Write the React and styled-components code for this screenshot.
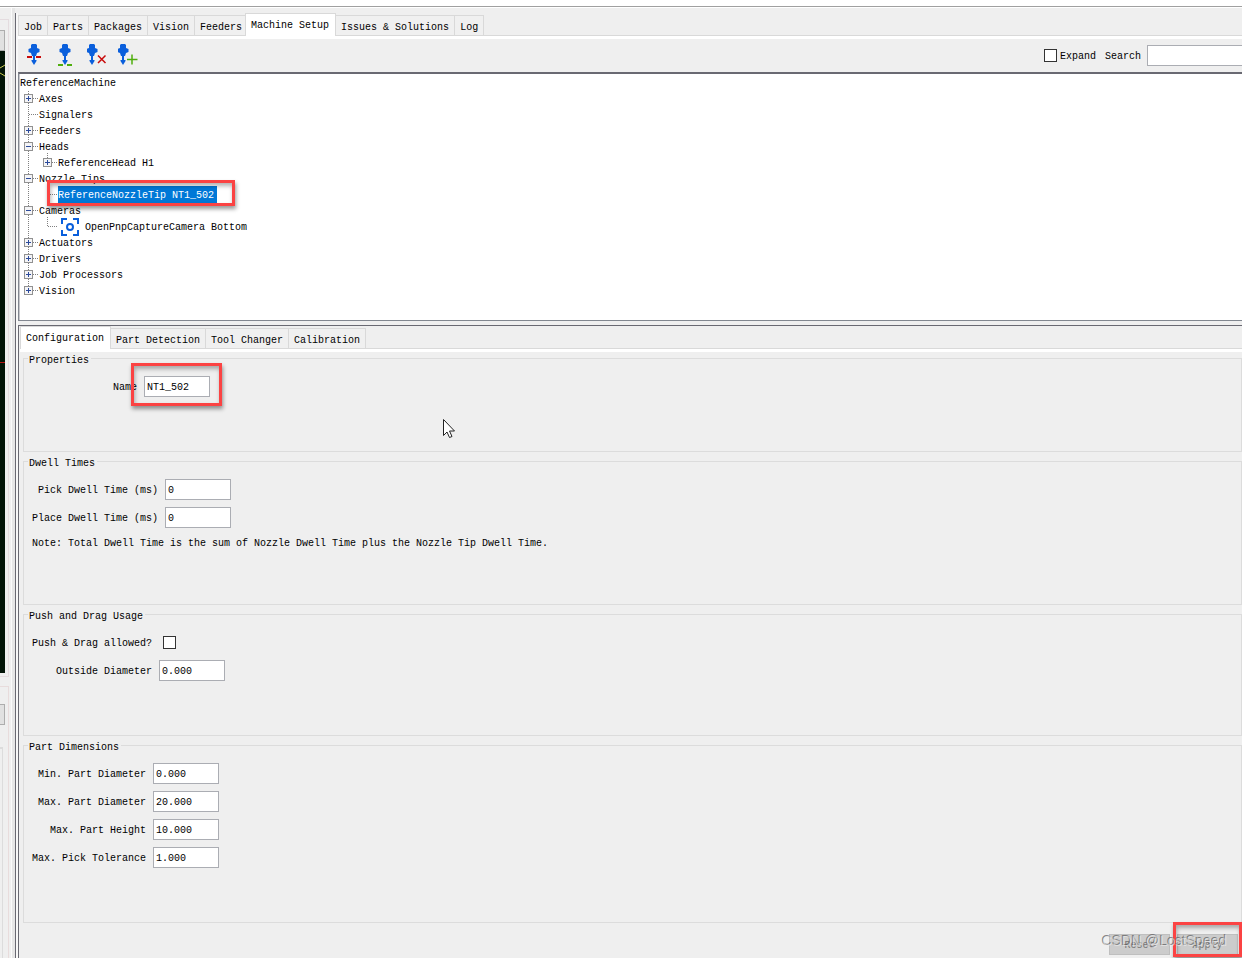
import React from 'react';
import styled, { createGlobalStyle } from 'styled-components';

const GlobalStyle = createGlobalStyle`
    *, *::before, *::after {
        box-sizing: border-box;
    }

    body {
        margin: 0;
        background: #efefef;
        color: #000;
        font-family: "Liberation Mono", monospace;
        font-size: 10px;
        line-height: 16px;
        overflow: hidden;
    }

    button, input {
        font: inherit;
        color: inherit;
    }
`;

const Page = styled.div`
    min-height: 100vh;
    display: flex;
    flex-direction: column;
`;

const TopEdge = styled.div`
    height: 8px;
    background: #fff;
    border-bottom: 1px solid #fff;
    box-shadow: inset 0 -1px 0 #a0a0a0;
`;

const Body = styled.div`
    flex: 1;
    display: flex;
`;

/* strip of the camera panel left of the splitter */
const CameraSide = styled.aside`
    width: 15px;
    padding: 11px 3px 0 0;
    border-right: 3px solid #e6e6e6;
    box-shadow: inset -1px 0 0 #fafafa;
    display: flex;
    flex-direction: column;
`;

const CameraFrame = styled.div`
    padding: 10px 3px 3px 0;
    border: 1px solid #e4dcdf;
    border-left: 0;
`;

const SideButton = styled.button`
    display: block;
    width: 5px;
    height: 21px;
    padding: 0;
    background: #e1e1e1;
    border: 1px solid #adadad;
    border-left: 0;
`;

const CameraImage = styled.svg`
    display: block;
    width: 5px;
    height: 622px;
    background: #021407;
`;

const JogFrame = styled.div`
    flex: 1;
    margin-top: 9px;
    padding-top: 17px;
    border: 1px solid #e8dcdc;
    border-left: 0;
    border-bottom: 0;
`;

const JogPanel = styled.div`
    width: 3px;
    height: 100%;
    margin-top: 22px;
    border: 1px solid #dcdcdc;
    border-left: 0;
    border-top-width: 2px;
`;

const Main = styled.main`
    flex: 1;
    min-width: 0;
    margin-top: 5px;
    padding-left: 2px;
    border-left: 1px solid #696972;
    background: #efefef;
    box-shadow: inset 2px 0 0 #f8f8f8;
    display: flex;
    flex-direction: column;
`;

const TabBar = styled.div`
    display: flex;
    align-items: flex-end;
    height: 23px;
    border-bottom: 1px solid #d9d9d9;
`;

const Tab = styled.button`
    height: ${props => (props.$active ? 23 : 20)}px;
    margin: ${props => (props.$active ? '0 -1px -1px -2px' : '0')};
    padding: ${props => (props.$active ? '2px 6px 1px 5px' : '5px 5px 0')};
    background: ${props => (props.$active ? '#fff' : '#f0f0f0')};
    border: 1px solid #d9d9d9;
    border-right-width: ${props => (props.$active || props.$last ? 1 : 0)}px;
    border-bottom: 0;
    line-height: 14px;
    white-space: nowrap;
    z-index: ${props => (props.$active ? 1 : 0)};

    &:first-child {
        margin-left: 0;
    }
`;

const TabEdge = styled.div`
    height: 3px;
    background: #fff;
`;

const Toolbar = styled.div`
    height: 33px;
    padding: 3px 0 0 7px;
    display: flex;
    align-items: flex-start;
    overflow: hidden;
`;

const IconButton = styled.button`
    width: 31px;
    height: 26px;
    padding: 0;
    border: 0;
    background: none;

    svg {
        display: block;
    }
`;

const SearchBar = styled.div`
    height: 27px;
    margin-left: auto;
    display: flex;
    align-items: center;
`;

const Check = styled.input`
    appearance: none;
    width: 13px;
    height: 13px;
    margin: 0;
    background: #fff;
    border: 1px solid #333;
`;

const CheckLabel = styled.div`
    display: flex;
    align-items: center;
    gap: 3px;
    margin-right: 9px;
`;

const SearchLabel = styled.label`
    padding-top: 2px;
`;

const SearchInput = styled.input`
    width: 95px;
    height: 21px;
    margin-left: 6px;
    padding: 0 2px;
    background: #fff;
    border: 1px solid #abadb3;
    border-right: 0;
    border-radius: 0;
`;

const TreePane = styled.div`
    height: 249px;
    padding-top: 1px;
    background: #fff;
    border: 1px solid #828790;
    border-top: 2px solid #696972;
    border-right: 0;
    box-shadow: inset 1px 0 0 #c8c8cc;
`;

const TreeList = styled.ul`
    margin: 0;
    padding: 0;
    list-style: none;
`;

const TreeRow = styled.li`
    position: relative;
    height: 16px;
    padding-left: ${props => [1, 5, 24][props.$level]}px;
    display: flex;
    align-items: center;
    white-space: nowrap;
`;

const TreeGuide = styled.svg`
    flex: none;
    width: 15px;
    height: 16px;
    overflow: visible;
`;

const TreeText = styled.span`
    padding: 2px 3px 0 0;
    background: ${props => (props.$selected ? '#0078d7' : 'transparent')};
    color: ${props => (props.$selected ? '#fff' : '#000')};
`;

const CameraIcon = styled.svg`
    flex: none;
    width: 18px;
    height: 18px;
    margin: 0 6px 0 3px;
`;

const Detail = styled.section`
    flex: 1;
    margin-top: 4px;
    padding-left: 1px;
    border-top: 1px solid #696972;
    border-left: 1px solid #696972;
    display: flex;
    flex-direction: column;
`;

const Form = styled.form`
    flex: 1;
    padding-left: 3px;
    display: flex;
    flex-direction: column;
`;

const Group = styled.fieldset`
    min-width: 0;
    margin: 0 0 3px;
    padding: 11px 8px 54px;
    border: 1px solid #dcdcdc;
`;

const Legend = styled.legend`
    margin-left: -4px;
    padding: 4px 2px 0 1px;
    line-height: 9px;
`;

const Fields = styled.div`
    display: grid;
    grid-template-columns: minmax(${props => props.$labelWidth || 0}px, max-content) max-content;
    grid-auto-rows: 21px;
    align-items: center;
    gap: 7px;
`;

const FieldLabel = styled.label`
    padding-top: 2px;
    text-align: right;
    white-space: nowrap;
`;

const FieldInput = styled.input`
    width: 66px;
    height: 21px;
    padding: 1px 2px 0;
    background: #fff;
    border: 1px solid #abadb3;
    border-radius: 0;
`;

const FieldCheck = styled(Check)`
    margin-left: 4px;
`;

const FieldBox = styled.div`
    position: relative;
    display: flex;
`;

const Note = styled.p`
    margin: 9px 0 0;
    line-height: 13px;
`;

const Actions = styled.div`
    position: relative;
    margin-top: auto;
    padding: 0 4px 3px 0;
    display: flex;
    justify-content: flex-end;
    gap: 7px;
`;

const ActionButton = styled.button`
    width: 61px;
    height: 21px;
    padding: 3px 0 0;
    border: 1px solid #bfbfbf;
    background: #ccc;
    color: #777;
`;

/* red marker frame laid over the part it points at */
const Marker = styled.div`
    position: absolute;
    top: ${props => props.$top}px;
    left: ${props => props.$left}px;
    width: ${props => props.$width}px;
    height: ${props => props.$height}px;
    border: 3px solid #fb4343;
    box-shadow: 1px 3px 4px rgba(0, 0, 0, 0.4), inset 1px 3px 4px rgba(0, 0, 0, 0.3);
    pointer-events: none;
    z-index: 2;
`;

const ApplyBox = styled.div`
    position: relative;
    display: flex;
`;

const Watermark = styled.span`
    position: absolute;
    right: 15px;
    bottom: 9px;
    color: rgba(240, 240, 240, 0.6);
    font-family: "Liberation Sans", sans-serif;
    font-size: 14px;
    text-shadow: -1px -1px 0 rgba(90, 90, 90, 0.7);
    white-space: nowrap;
    pointer-events: none;
    z-index: 3;
`;

const Pointer = styled.svg`
    position: absolute;
    left: 443px;
    top: 419px;
    width: 13px;
    height: 20px;
    pointer-events: none;
`;

const mainTabs = ['Job', 'Parts', 'Packages', 'Vision', 'Feeders', 'Machine Setup', 'Issues & Solutions', 'Log'];
const detailTabs = ['Configuration', 'Part Detection', 'Tool Changer', 'Calibration'];

const treeRows = [
    { text: 'ReferenceMachine', level: 0 },
    { text: 'Axes', level: 1, sign: '+' },
    { text: 'Signalers', level: 1 },
    { text: 'Feeders', level: 1, sign: '+' },
    { text: 'Heads', level: 1, sign: '-' },
    { text: 'ReferenceHead H1', level: 2, sign: '+' },
    { text: 'Nozzle Tips', level: 1, sign: '-' },
    { text: 'ReferenceNozzleTip NT1_502', level: 2, selected: true },
    { text: 'Cameras', level: 1, sign: '-' },
    { text: 'OpenPnpCaptureCamera Bottom', level: 2, camera: true },
    { text: 'Actuators', level: 1, sign: '+' },
    { text: 'Drivers', level: 1, sign: '+' },
    { text: 'Job Processors', level: 1, sign: '+' },
    { text: 'Vision', level: 1, sign: '+', last: true },
];

function Tabs({ items, active }) {
    return (
        <TabBar role="tablist">
            {items.map((item, i) => (
                <Tab
                    key={item}
                    type="button"
                    role="tab"
                    aria-selected={item === active}
                    $active={item === active}
                    $last={i === items.length - 1}
                >
                    {item}
                </Tab>
            ))}
        </TabBar>
    );
}

const nozzle = 'M-2 2h4l1 1v3l2.500 1v3l-2.500 1l-1 3h-1v4h1.500v1l-2.500 4l-2.500 -4v-1h1.500v-4h-1l-1 -3l-2.500 -1v-3l2.500 -1v-3z';

function NozzleIcon({ kind }) {
    const center = kind === 'load' || kind === 'unload' ? 9 : 5;
    return (
        <svg width="26" height="26" viewBox="0 0 26 26">
            <path fill="#0a5fdc" transform={`translate(${center} 0)`} d={nozzle} />
            {kind === 'load' && <path fill="#c80a0a" d="M2 14h5v2h-5zM11 14h5v2h-5z" />}
            {kind === 'unload' && <path fill="#4fae0c" d="M2 22h5v2h-5zM11 22h5v2h-5z" />}
            {kind === 'remove' && <path stroke="#c80a0a" strokeWidth="1.500" d="M11 13.500l7.500 7.500M18.500 13.500l-7.500 7.500" />}
            {kind === 'add' && <path stroke="#4fae0c" strokeWidth="1.500" d="M9 17.500h10.500M14 12.500v10" />}
        </svg>
    );
}

function Guide({ row }) {
    const dots = { stroke: '#808080', strokeDasharray: '1 1' };
    return (
        <TreeGuide viewBox="0 0 15 16">
            {row.level === 1 && <path {...dots} d={row.last ? 'M4.500 0V8' : 'M4.500 0V16'} />}
            {row.level === 2 && <path {...dots} d="M4.500 -2V8M-14.500 0V16" />}
            <path {...dots} d="M5 7.500H14" />
            {row.sign && (
                <>
                    <rect x="0.500" y="3.500" width="8" height="8" fill="#f4f4f6" stroke="#919191" />
                    <path stroke="#2b4a9b" d={row.sign === '+' ? 'M2 7.500h5M4.500 5v5' : 'M2 7.500h5'} />
                </>
            )}
        </TreeGuide>
    );
}

function Tree() {
    return (
        <TreePane>
            <TreeList>
                {treeRows.map(row => (
                    <TreeRow key={row.text} $level={row.level}>
                        {row.level > 0 && <Guide row={row} />}
                        {row.camera && (
                            <CameraIcon viewBox="0 0 18 18" fill="none" stroke="#0a5fdc" strokeWidth="2">
                                <path d="M1 6V1h5M12 1h5v5M17 12v5h-5M6 17H1v-5" />
                                <circle cx="9" cy="9" r="3" />
                            </CameraIcon>
                        )}
                        <TreeText $selected={row.selected}>{row.text}</TreeText>
                        {row.selected && <Marker $top={-7} $left={28} $width={188} $height={26} />}
                    </TreeRow>
                ))}
            </TreeList>
        </TreePane>
    );
}

function Field({ id, label, value, children }) {
    return (
        <>
            <FieldLabel htmlFor={id}>{label}</FieldLabel>
            <FieldBox>
                <FieldInput id={id} type="text" defaultValue={value} />
                {children}
            </FieldBox>
        </>
    );
}

function NozzleTipForm() {
    return (
        <Form>
            <Group>
                <Legend>Properties</Legend>
                <Fields $labelWidth={105}>
                    <Field id="name" label="Name" value="NT1_502">
                        <Marker $top={-13} $left={-13} $width={91} $height={43} />
                    </Field>
                </Fields>
            </Group>
            <Group>
                <Legend>Dwell Times</Legend>
                <Fields>
                    <Field id="pick-dwell" label="Pick Dwell Time (ms)" value="0" />
                    <Field id="place-dwell" label="Place Dwell Time (ms)" value="0" />
                </Fields>
                <Note>Note: Total Dwell Time is the sum of Nozzle Dwell Time plus the Nozzle Tip Dwell Time.</Note>
            </Group>
            <Group>
                <Legend>Push and Drag Usage</Legend>
                <Fields>
                    <FieldLabel htmlFor="push-drag">Push &amp; Drag allowed?</FieldLabel>
                    <FieldCheck id="push-drag" type="checkbox" />
                    <Field id="outside" label="Outside Diameter" value="0.000" />
                </Fields>
            </Group>
            <Group>
                <Legend>Part Dimensions</Legend>
                <Fields>
                    <Field id="min-diameter" label="Min. Part Diameter" value="0.000" />
                    <Field id="max-diameter" label="Max. Part Diameter" value="20.000" />
                    <Field id="max-height" label="Max. Part Height" value="10.000" />
                    <Field id="tolerance" label="Max. Pick Tolerance" value="1.000" />
                </Fields>
            </Group>
            <Actions>
                <ActionButton type="button" disabled>Reset</ActionButton>
                <ApplyBox>
                    <ActionButton type="button" disabled>Apply</ActionButton>
                    <Marker $top={-12} $left={-4} $width={69} $height={35} />
                </ApplyBox>
                <Watermark>CSDN @LostSpeed</Watermark>
            </Actions>
        </Form>
    );
}

function App() {
    return (
        <Page>
            <GlobalStyle />
            <TopEdge />
            <Body>
                <CameraSide>
                    <CameraFrame>
                        <SideButton type="button" aria-label="Camera" />
                        <CameraImage viewBox="0 0 5 622">
                            <path fill="none" stroke="#c8c850" d="M0 17L5 14M0 22L5 25" />
                            <path stroke="#b41414" d="M0 311.500H5" />
                        </CameraImage>
                    </CameraFrame>
                    <JogFrame>
                        <SideButton type="button" aria-label="Jog" />
                        <JogPanel />
                    </JogFrame>
                </CameraSide>
                <Main>
                    <Tabs items={mainTabs} active="Machine Setup" />
                    <TabEdge />
                    <Toolbar>
                        <IconButton type="button" aria-label="Load nozzle tip"><NozzleIcon kind="load" /></IconButton>
                        <IconButton type="button" aria-label="Unload nozzle tip"><NozzleIcon kind="unload" /></IconButton>
                        <IconButton type="button" aria-label="Remove nozzle tip"><NozzleIcon kind="remove" /></IconButton>
                        <IconButton type="button" aria-label="New nozzle tip"><NozzleIcon kind="add" /></IconButton>
                        <SearchBar>
                            <CheckLabel>
                                <Check id="expand" type="checkbox" />
                                <SearchLabel htmlFor="expand">Expand</SearchLabel>
                            </CheckLabel>
                            <SearchLabel htmlFor="search">Search</SearchLabel>
                            <SearchInput id="search" type="text" />
                        </SearchBar>
                    </Toolbar>
                    <Tree />
                    <Detail>
                        <Tabs items={detailTabs} active="Configuration" />
                        <TabEdge />
                        <NozzleTipForm />
                    </Detail>
                </Main>
            </Body>
            <Pointer viewBox="0 0 13 20">
                <path fill="#fff" stroke="#222" d="M0.500 0.500V16.500L4 13L6.500 18.500L9 17.500L6.500 12H11.500Z" />
            </Pointer>
        </Page>
    );
}

export default App;
